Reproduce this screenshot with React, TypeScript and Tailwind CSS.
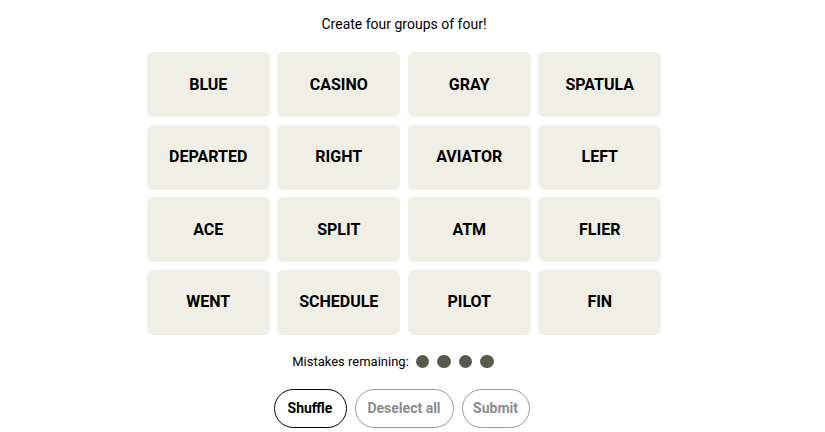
const words = [
  'BLUE', 'CASINO', 'GRAY', 'SPATULA',
  'DEPARTED', 'RIGHT', 'AVIATOR', 'LEFT',
  'ACE', 'SPLIT', 'ATM', 'FLIER',
  'WENT', 'SCHEDULE', 'PILOT', 'FIN',
]

function Tile({ word }: { word: string }) {
  return (
    <button className="h-[65px] rounded-md bg-[#efefe6] flex items-center justify-center text-[16px] font-bold text-black">
      {word}
    </button>
  )
}

export default function App() {
  return (
    <div className="w-[808px] h-[432px] bg-white flex flex-col items-center font-['Roboto',sans-serif] text-black">
      <p className="mt-[14px] h-[20px] leading-[20px] text-[14px]">Create four groups of four!</p>

      <div className="mt-[18px] grid grid-cols-[repeat(4,123px)] gap-x-[7.5px] gap-y-[7.5px]">
        {words.map(w => (
          <Tile key={w} word={w} />
        ))}
      </div>

      <div className="mt-[17px] h-[20px] flex items-center gap-[7px] text-[13px] mr-[22px]">
        <span>Mistakes remaining:</span>
        <div className="flex items-center gap-[8px]">
          {[0, 1, 2, 3].map(i => (
            <span key={i} className="w-[13.5px] h-[13.5px] rounded-full bg-[#5a594e]" />
          ))}
        </div>
      </div>

      <div className="mt-[17px] flex gap-[8px] mr-[5px]">
        <button className="h-[39px] w-[73px] rounded-full border border-black text-[14px] font-bold">Shuffle</button>
        <button className="h-[39px] w-[99px] rounded-full border border-[#9a9a9a] text-[14px] font-bold text-[#8c8c8c]">Deselect all</button>
        <button className="h-[39px] w-[68px] rounded-full border border-[#9a9a9a] text-[14px] font-bold text-[#8c8c8c]">Submit</button>
      </div>
    </div>
  )
}
